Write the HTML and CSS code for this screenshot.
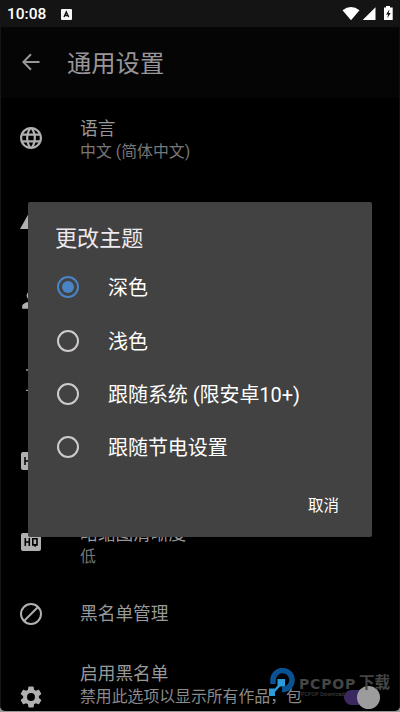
FILE: index.html
```
<!DOCTYPE html>
<html lang="zh-CN">
<head>
<meta charset="utf-8">
<title>通用设置</title>
<link rel="stylesheet" href="styles.css">
</head>
<body>
<div class="screen">
  <div class="status">
    <span class="time">10:08</span>
    <svg class="badge" viewBox="0 0 11 11"><rect width="11" height="11" rx="1" fill="#f5f5f5"/><path d="M3 8 5.3 3 7.700 8M4 6.500h2.800" fill="none" stroke="#111" stroke-width="1.400"/></svg>
    <svg class="sys" viewBox="0 0 54 16" fill="#fff"><path d="M.5 4.200Q9-2.300 17.500 4.200L9 14.200Z"/><path d="M33.500 1.200V14H20.700Z"/><path d="M42 1.600h2V0h4v1.600h2.700V14H42Z"/><path d="m47.500 3.300-3.400 5.200h2l-.8 3.700 3.400-5.200h-2Z" fill="#111"/></svg>
  </div>
  <header class="bar">
    <svg class="back" viewBox="0 0 18 18"><path d="M17.500 9H1.500M9 1.300 1.400 9 9 16.700" fill="none" stroke="#999599" stroke-width="2"/></svg>
    <h1>通用设置</h1>
  </header>
  <main class="list">
    <div class="row language">
      <svg class="icon" viewBox="2 2 20 20" fill="#b0b0b0"><path d="M11.990 2C6.470 2 2 6.480 2 12s4.470 10 9.990 10C17.520 22 22 17.520 22 12S17.520 2 11.990 2zm6.930 6h-2.950a15.650 15.650 0 0 0-1.380-3.560A8.030 8.030 0 0 1 18.920 8zM12 4.040c.83 1.200 1.480 2.530 1.910 3.960h-3.820c.43-1.430 1.080-2.760 1.910-3.960zM4.260 14a8.200 8.200 0 0 1 0-4h3.380a16.500 16.500 0 0 0 0 4H4.260zm.82 2h2.950c.32 1.250.78 2.450 1.380 3.560A7.990 7.990 0 0 1 5.080 16zm2.950-8H5.080a7.990 7.990 0 0 1 4.330-3.560A15.650 15.650 0 0 0 8.030 8zM12 19.960A14.100 14.100 0 0 1 10.090 16h3.820A14.100 14.100 0 0 1 12 19.960zM14.340 14H9.660a14.700 14.700 0 0 1 0-4h4.680a14.700 14.700 0 0 1 0 4zm.25 5.560c.6-1.110 1.060-2.310 1.380-3.560h2.950a8.030 8.030 0 0 1-4.330 3.560zM16.360 14a16.500 16.500 0 0 0 0-4h3.380a8.200 8.200 0 0 1 0 4h-3.380z"/></svg>
      <div class="copy"><div class="label">语言</div><div class="detail">中文 (简体中文)</div></div>
    </div>
    <div class="row"><svg class="icon" viewBox="0 0 22 22" fill="#b0b0b0"><path d="M0 20 11 .5 22 20Z"/></svg></div>
    <div class="row"><svg class="icon" viewBox="2 2 20 20" fill="#b0b0b0"><path d="M12 12a4 4 0 1 0 0-8 4 4 0 0 0 0 8zm0 1.500c-2.700 0-8 1.300-8 4V20h16v-2.500c0-2.700-5.300-4-8-4z"/></svg></div>
    <div class="row"><svg class="icon" viewBox="0 0 22 22"><path d="M6 1h10M6 21.300h10M11 1v20" stroke="#a0a0a0" stroke-width="1.300"/></svg></div>
    <div class="row"><svg class="icon" viewBox="0 0 22 22"><rect x="1" y="3" width="20" height="18" rx="2" fill="#b0b0b0"/><path d="M5 8v8M9 8v8M5 12h4M13 8.500h4v6h-4Z" fill="none" stroke="#000" stroke-width="1.500"/></svg></div>
    <div class="row quality">
      <svg class="icon" viewBox="0 0 22 22"><rect x="1" y="2" width="20" height="18" rx="2" fill="#b0b0b0"/><path d="M5.300 7v8M9.300 7v8M5.300 11h4M12.800 7.800h4.200v6.100h-4.200ZM15.200 13.500v2.200" fill="none" stroke="#000" stroke-width="1.600"/></svg>
      <div class="copy"><div class="label">略缩图清晰度</div><div class="detail">低</div></div>
    </div>
    <div class="row manage">
      <svg class="icon" viewBox="0 0 22 22"><circle cx="11" cy="11" r="10" fill="none" stroke="#b0b0b0" stroke-width="2"/><path d="m4 18L18 4" stroke="#b0b0b0" stroke-width="2"/></svg>
      <div class="copy"><div class="label">黑名单管理</div></div>
    </div>
    <div class="row enable">
      <svg class="icon gear" viewBox="2 2 20 20" fill="#b0b0b0"><path d="M19.140 12.940a7.500 7.500 0 0 0 0-1.880l2.030-1.580a.5.500 0 0 0 .12-.61l-1.920-3.320a.5.500 0 0 0-.59-.22l-2.390.96a7 7 0 0 0-1.620-.94l-.36-2.540A.5.500 0 0 0 13.930 2.400h-3.860a.5.500 0 0 0-.47.410l-.36 2.540a7.300 7.300 0 0 0-1.620.94l-2.390-.96a.5.500 0 0 0-.59.220L2.720 8.870a.5.500 0 0 0 .12.610l2.030 1.580a7.500 7.500 0 0 0 0 1.880l-2.030 1.580a.5.500 0 0 0-.12.610l1.920 3.320c.12.220.37.290.59.220l2.390-.96c.5.380 1.030.7 1.620.94l.36 2.540c.5.240.24.410.47.410h3.860c.24 0 .44-.17.470-.41l.36-2.540a7.300 7.300 0 0 0 1.620-.94l2.390.96c.22.080.47 0 .59-.22l1.920-3.320a.5.500 0 0 0-.12-.61zM12 15.600a3.600 3.600 0 1 1 0-7.200 3.600 3.600 0 0 1 0 7.200z"/></svg>
      <div class="copy"><div class="label">启用黑名单</div><div class="detail">禁用此选项以显示所有作品，包</div></div>
      <div class="switch"><span class="thumb"></span></div>
    </div>
  </main>
</div>
<section class="dialog">
  <h2>更改主题</h2>
  <div class="option"><span class="radio on"></span><span class="choice">深色</span></div>
  <div class="option"><span class="radio"></span><span class="choice">浅色</span></div>
  <div class="option"><span class="radio"></span><span class="choice">跟随系统 (限安卓10+)</span></div>
  <div class="option"><span class="radio"></span><span class="choice">跟随节电设置</span></div>
  <div class="actions">取消</div>
</section>
<div class="watermark">
  <svg viewBox="0 0 28 30"><path d="M4 16V12A9.500 9.500 0 1 1 13 21.500" fill="none" stroke="#095293" stroke-width="5.500"/><path d="M8.500 11H16v7.500H11L6 24v4H0v-7.500h6l2.500-3Z" fill="#2b9bd9"/></svg>
  <div class="brand"><div class="name"><b>PCPOP</b><span>下载</span></div><div class="tag">PCPOP Download</div></div>
</div>
</body>
</html>
```
FILE: styles.css
```
* { box-sizing: border-box; }
body { margin: 0; width: 400px; height: 712px; overflow: hidden; position: relative; background: #989599; font-family: Roboto, "Noto Sans CJK SC", sans-serif; }
.screen { height: 711px; overflow: hidden; background: #000; border-left: 1px solid #151515; border-right: 1px solid #111; border-radius: 0 0 5px 5px; }
.status { height: 27px; background: #141414; display: flex; align-items: center; padding: 1px 3px 0 6px; }
.time { font-size: 15.500px; font-weight: 500; color: #fff; line-height: 26px; width: 54px; }
.badge { width: 11px; height: 11px; }
.sys { width: 54px; height: 16px; margin-left: auto; }
.bar { height: 71px; background: #050505; display: flex; align-items: center; padding: 0 0 1px 21px; }
.back { width: 18px; height: 18px; margin-right: 27px; }
h1 { margin: 0; padding-top: 3px; font-size: 24.300px; font-weight: 400; line-height: 36px; color: #999599; }
.row { height: 80px; display: flex; align-items: center; padding-left: 19px; }
.icon { width: 22px; height: 22px; margin-right: 38px; flex: none; }
.language { margin-bottom: 2px; }
.label { font-size: 17.700px; line-height: 24px; color: #999; white-space: nowrap; }
.detail { font-size: 15.900px; line-height: 22px; color: #777; white-space: nowrap; }
.language .copy { padding-top: 3px; }
.quality { height: 84px; }
.quality .copy { padding-top: 5px; }
.manage { height: 60px; }
.enable { height: 90px; align-items: flex-start; padding-top: 18px; }
.gear { margin-top: 24px; }
.enable .detail { color: #8b8b8b; font-size: 15.850px; }
.switch { margin: 28px 19px 0 auto; width: 36px; height: 15px; border-radius: 8px; background: #3b2860; position: relative; flex: none; }
.thumb { position: absolute; right: 0; top: -4px; width: 23px; height: 23px; border-radius: 50%; background: #9c9c9c; }
.dialog { position: absolute; left: 28px; top: 202px; width: 344px; height: 334.500px; border-radius: 2px; background: #424242; color: #fff; padding: 19px 33px 0 27px; }
h2 { margin: 0 0 5.500px; font-size: 22.100px; font-weight: 400; line-height: 34px; color: #eee9ee; }
.option { height: 53.400px; display: flex; align-items: center; font-size: 20px; white-space: nowrap; padding-left: 1.500px; line-height: 30px; }
.choice { padding-top: 2px; letter-spacing: -.05px; }
.radio { width: 22px; height: 22px; border: 2px solid #cfcacf; border-radius: 50%; margin-right: 29.500px; display: flex; align-items: center; justify-content: center; }
.on { border-color: #4984c4; }
.on::after { content: ""; width: 12px; height: 12px; border-radius: 50%; background: #4984c4; }
.actions { font-size: 15.500px; line-height: 24px; text-align: right; margin-top: 20px; }
.watermark { position: absolute; left: 269px; top: 668px; display: flex; }
.watermark svg { width: 28px; height: 30px; }
.brand { color: #454545; padding: 7px 0 0 2px; }
.name { display: flex; align-items: center; height: 16px; line-height: 16px; }
.name b { font: 700 14px/16px "DejaVu Sans", sans-serif; letter-spacing: .8px; width: 60px; padding-top: 1px; }
.name span { font-size: 15.500px; font-weight: 700; }
.tag { font-size: 5.500px; line-height: 6px; margin-left: 2px; }
```
